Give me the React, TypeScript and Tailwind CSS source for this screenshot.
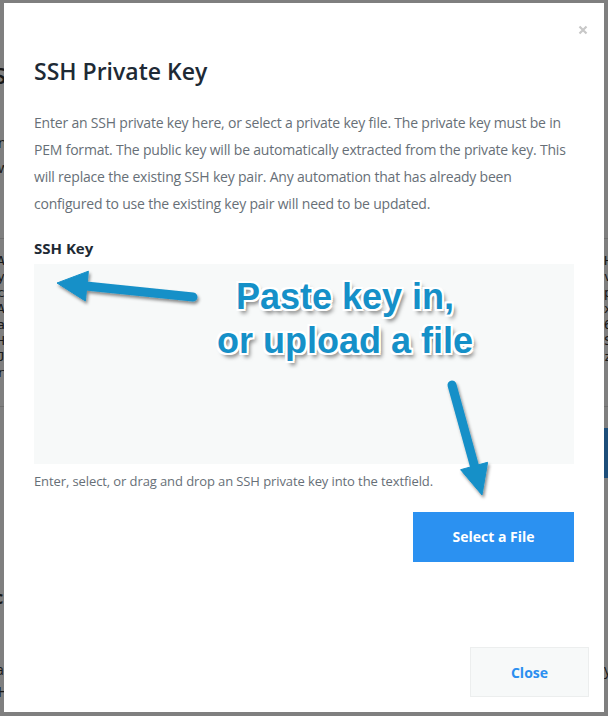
export default function App() {
  const outline =
    "[text-shadow:-2px_-2px_0_#fff,2px_-2px_0_#fff,-2px_2px_0_#fff,2px_2px_0_#fff,0_2px_0_#fff,0_-2px_0_#fff,2px_0_0_#fff,-2px_0_0_#fff,3px_4px_4px_rgba(0,0,0,0.55)]";
  return (
    <div className="relative w-[608px] h-[716px] overflow-hidden bg-white font-['Open_Sans',sans-serif]">
      {/* page behind the modal */}
      <div className="flex flex-col w-full h-full text-[#333]">
        <div className="h-[60px] shrink-0" />
        <div className="h-[30px] shrink-0 -ml-[6px] text-[22px] leading-[30px] font-semibold">S</div>
        <div className="h-[40px] shrink-0" />
        <div className="h-[50px] shrink-0 -ml-[2px] text-[14px] leading-[25px]">
          <div>n</div>
          <div>w</div>
        </div>
        <div className="h-[59px] shrink-0 border-b border-[#ddd]" />
        <div className="h-[168px] shrink-0 flex justify-between pt-[14px] text-[13px] leading-[16px] font-['DejaVu_Sans_Mono',monospace] border-b border-[#ddd]">
          <div className="-ml-[3px]">
            <div>A</div><div>y</div><div>c</div><div>A</div><div>a</div><div>H</div><div>J</div><div>r</div>
          </div>
          <div className="w-[4px] overflow-hidden">
            <div>H</div><div>v</div><div>p</div><div>x</div><div>6</div><div>S</div><div>z</div>
          </div>
        </div>
        <div className="h-[21px] shrink-0" />
        <div className="h-[50px] shrink-0 flex justify-end">
          <div className="w-[4px] h-[50px] bg-[#3a9cf5]" />
        </div>
        <div className="h-[107px] shrink-0" />
        <div className="h-[24px] shrink-0 -ml-[6px] text-[18px] leading-[24px] font-bold">c</div>
        <div className="h-[50px] shrink-0" />
        <div className="h-[22px] shrink-0 flex justify-between text-[14px] leading-[22px]">
          <div className="-ml-[4px]">a</div>
          <div className="w-[4px] overflow-hidden">y</div>
        </div>
        <div className="h-[22px] shrink-0 -ml-[2px] text-[14px] leading-[22px]">H</div>
      </div>

      {/* overlay with the dialog */}
      <div className="absolute inset-0 bg-black/50 pt-[3px] pl-[4px]">
        <div className="relative w-[600px] h-[709px] bg-white flex flex-col">
          <button className="absolute right-[16px] top-[22px] w-[10px] h-[10px]">
            <svg width="10" height="10" viewBox="0 0 10 10">
              <path d="M1.5 1.5L8.5 8.5M8.5 1.5L1.5 8.5" stroke="#c8c8c8" strokeWidth="2.2" />
            </svg>
          </button>

          <div className="px-[30px] pt-[53px]">
            <h2 className="text-[23px] leading-[30px] font-semibold text-[#1e2a35]">SSH Private Key</h2>
            <p className="mt-[23px] text-[14px] leading-[27px] tracking-[-0.2px] text-[#676f77]">
              Enter an SSH private key here, or select a private key file. The private key must be in PEM format. The public key will be automatically extracted from the private key. This will replace the existing SSH key pair. Any automation that has already been configured to use the existing key pair will need to be updated.
            </p>
            <div className="mt-[21px] text-[15px] leading-[20px] font-bold text-[#1e2a35]">SSH Key</div>
            <textarea className="mt-[5.5px] block w-full h-[200px] bg-[#f7f9f9] resize-none outline-none" />
            <p className="mt-[7px] text-[13px] leading-[20px] tracking-[-0.1px] text-[#676f77]">
              Enter, select, or drag and drop an SSH private key into the textfield.
            </p>
            <div className="mt-[21px] flex justify-end">
              <button className="w-[161px] h-[50px] bg-[#2b91f1] text-white font-bold text-[14px]">Select a File</button>
            </div>
          </div>

          <div className="mt-auto flex justify-end p-[15px]">
            <button className="w-[119px] h-[50px] bg-[#f7f9f9] border border-[#eceeee] text-[#2b8ff0] font-bold text-[14px]">
              Close
            </button>
          </div>

          {/* annotations */}
          <svg className="absolute inset-0 pointer-events-none" width="600" height="709" viewBox="0 0 600 709">
            <defs>
              <filter id="sh" x="-20%" y="-20%" width="140%" height="140%">
                <feDropShadow dx="1.5" dy="2.5" stdDeviation="1.5" floodColor="#000" floodOpacity="0.45" />
              </filter>
            </defs>
            <g filter="url(#sh)" fill="#1590c8" stroke="#1590c8">
              <line x1="189" y1="294" x2="82" y2="283" strokeWidth="9" strokeLinecap="round" />
              <polygon points="53,280 84.4,268.2 81.4,298" strokeWidth="1" strokeLinejoin="round" />
              <line x1="448" y1="382" x2="471" y2="465" strokeWidth="9" strokeLinecap="round" />
              <polygon points="478,492 483.6,459.3 456.6,466.7" strokeWidth="1" strokeLinejoin="round" />
            </g>
          </svg>
          <div
            className={`absolute left-[141px] top-[271.5px] w-[400px] text-center font-['Liberation_Sans',Arial,sans-serif] font-bold text-[36px] leading-[44px] text-[#1590c8] ${outline}`}
          >
            <div>Paste key in,</div>
            <div>or upload a file</div>
          </div>
        </div>
      </div>
    </div>
  );
}
